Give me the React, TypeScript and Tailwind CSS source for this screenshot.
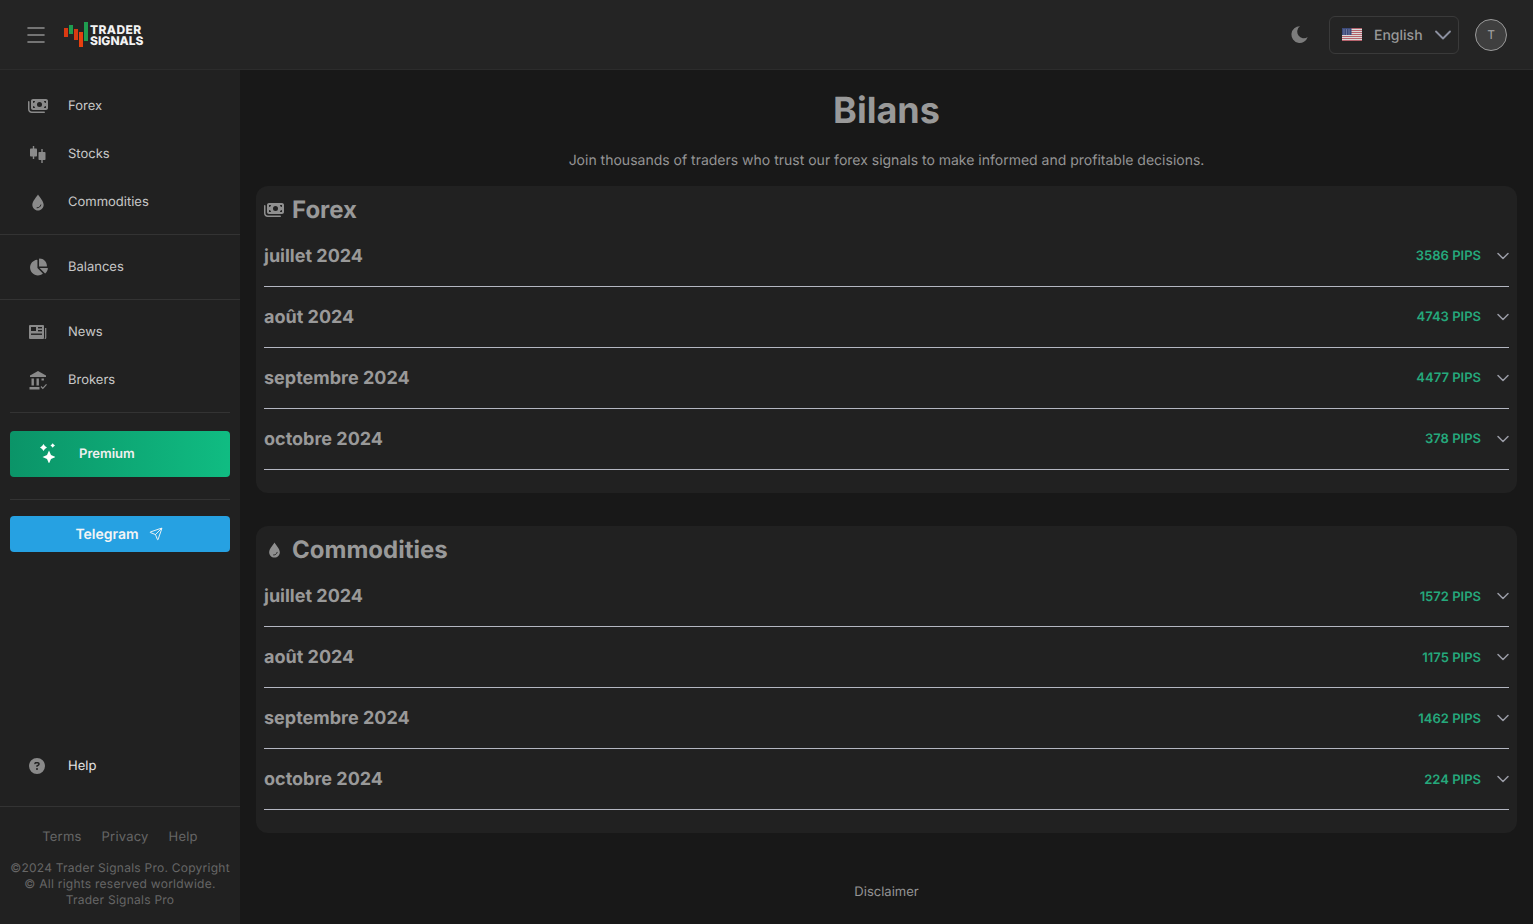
import React from "react";
import { ChevronDown, Menu, Send } from "lucide-react";
import { FaMoneyBills, FaChartPie, FaCircleQuestion } from "react-icons/fa6";

const StocksIcon = ({ className }: { className?: string }) => (
  <svg viewBox="0 0 16 17" className={className} fill="currentColor">
    <rect x="2.8" y="0" width="1.4" height="13" />
    <rect x="0" y="2.5" width="7" height="8" rx="0.8" />
    <rect x="11.3" y="3" width="1.4" height="14" />
    <rect x="8.5" y="6" width="7" height="8" rx="0.8" />
  </svg>
);

const DropIcon = ({ className }: { className?: string }) => (
  <svg viewBox="0 0 14 18" className={className} fill="currentColor">
    <path d="M7 0.5C5.6 3 1 7.6 1 11.4 1 14.8 3.7 17.5 7 17.5s6-2.7 6-6.1C13 7.6 8.4 3 7 0.5z" />
    <path d="M6 14.6c2 0 3.5-1 4-3" fill="none" stroke="#212121" strokeWidth="1" strokeLinecap="round" />
  </svg>
);

const NewsIcon = ({ className }: { className?: string }) => (
  <svg viewBox="0 0 18 14" className={className}>
    <rect x="0" y="0" width="15" height="14" rx="1" fill="currentColor" />
    <rect x="2" y="2" width="5" height="4" fill="#212121" />
    <rect x="9" y="2" width="4" height="1.4" fill="#212121" />
    <rect x="9" y="5" width="4" height="1.4" fill="#212121" />
    <rect x="2" y="8.5" width="11" height="1.4" fill="#212121" />
    <path d="M16.7 3v9.5q0 1-1 1" fill="none" stroke="currentColor" strokeWidth="1.2" />
  </svg>
);

const BankIcon = ({ className }: { className?: string }) => (
  <svg viewBox="0 0 18 19" className={className} fill="currentColor">
    <path d="M9 0 17 4.4V6H1V4.4z" />
    <rect x="2.5" y="7.5" width="2.4" height="7" />
    <rect x="7.5" y="7.5" width="2.4" height="7" />
    <rect x="12.5" y="7.5" width="2.4" height="2" />
    <rect x="0.5" y="16" width="10" height="2.5" />
    <path d="M12 15.5l1.8 1.8 3.7-4" fill="none" stroke="currentColor" strokeWidth="1.2" />
  </svg>
);

const MoonIcon = ({ className }: { className?: string }) => (
  <svg viewBox="0 0 18 17" className={className} fill="currentColor">
    <path d="M9 .3A8.3 8.3 0 1 0 16.7 11 6.5 6.5 0 0 1 9 .3z" />
  </svg>
);

const SparkIcon = ({ className }: { className?: string }) => (
  <svg viewBox="0 0 15 20" className={className} fill="currentColor">
    <path d="M9 7.5 11 12 15.5 14 11 16 9 20.5 7 16 2.5 14 7 12z" />
    <path d="M3.5 1 4.9 3.1 7 4.5 4.9 5.9 3.5 8 2.1 5.9 0 4.5 2.1 3.1z" />
    <path d="M12.7 0.2 13.7 1.5 15 2.5 13.7 3.5 12.7 4.8 11.7 3.5 10.4 2.5 11.7 1.5z" />
  </svg>
);

const Logo = () => (
  <div className="flex items-center gap-[2px]">
    <svg viewBox="0 0 24 25" className="h-[25px] w-[24px]">
      <rect x="0" y="6" width="4" height="9" fill="#d93a12" />
      <rect x="5" y="3" width="4" height="9" fill="#1f9d4f" />
      <rect x="10" y="7" width="4" height="11" fill="#d93a12" />
      <rect x="15" y="10" width="4" height="15" fill="#e8400f" />
      <rect x="20" y="0" width="4" height="19" fill="#1f9d4f" />
    </svg>
    <div className="flex flex-col text-[12px] leading-[11px] font-extrabold text-[#f2f2f2]">
      <div className="h-[11px] tracking-[0.4px]">TRADER</div>
      <div className="h-[11px]">SIGNALS</div>
    </div>
  </div>
);

const Flag = () => (
  <svg viewBox="0 0 20 13" className="h-[13px] w-[20px]">
    <rect width="20" height="13" fill="#d9d9d9" />
    {[0, 2, 4, 6, 8, 10, 12].map((y) => (
      <rect key={y} y={y} width="20" height="1" fill="#b5626c" />
    ))}
    <rect width="9.5" height="7" fill="#3c4a7a" />
    {[1.5, 4, 6.5].map((x) =>
      [1.5, 3.5, 5.5].map((y) => <rect key={`${x}-${y}`} x={x} y={y} width="1" height="1" fill="#9aa2c0" />)
    )}
  </svg>
);

const NavItem = ({ icon, label, bright }: { icon: React.ReactNode; label: string; bright?: boolean }) => (
  <div className={`flex h-12 items-center text-[13px] ${bright ? "text-[#e5e5e5]" : "text-[#c8c8c8]"}`}>
    <span className="flex w-[68px] justify-center pl-[18px] pr-[10px] text-[#8a8a8a]">{icon}</span>
    <span className="pt-[2px]">{label}</span>
  </div>
);

const MonthRow = ({ month, pips }: { month: string; pips: number }) => (
  <div className="flex h-[61px] items-center border-b border-[#b4b7c2]">
    <span className="flex-1 pt-[2px] text-lg font-bold text-[#999999]">{month}</span>
    <span className="pt-[2px] text-[13px] font-semibold text-[#25a97c]">{pips} PIPS</span>
    <ChevronDown className="-mr-1 ml-3 h-5 w-5 text-[#9a9ca6]" strokeWidth={1.8} />
  </div>
);

const Section = ({ icon, title, rows }: { icon: React.ReactNode; title: string; rows: [string, number][] }) => (
  <section className="rounded-xl bg-[#212121] px-2 pb-[23px]">
    <div className="flex h-[40px] items-center gap-2 pt-[7px] text-2xl font-bold text-[#999999]">
      <span className="flex w-5 justify-center text-[#8f8f8f]">{icon}</span>
      <span>{title}</span>
    </div>
    {rows.map(([month, pips]) => (
      <MonthRow key={month} month={month} pips={pips} />
    ))}
  </section>
);

export default function App() {
  return (
    <div className="flex h-[924px] flex-col overflow-hidden bg-[#181818] font-['Inter',sans-serif] [text-rendering:geometricPrecision]">
      {/* Top bar */}
      <header className="flex h-[70px] items-center border-b border-[#2c2c2c] bg-[#242424] pl-6 pr-[26px]">
        <Menu className="mr-4 h-6 w-6 text-[#8e8e8e]" strokeWidth={1.6} />
        <Logo />
        <div className="flex-1" />
        <MoonIcon className="mr-[20px] h-[17px] w-[18px] text-[#7c7c7c]" />
        <div className="mr-4 flex h-[38px] w-[130px] items-center rounded-md border border-[#3a3a3a] pl-3 pr-[1px] text-sm font-medium text-[#999999]">
          <Flag />
          <span className="ml-3 flex-1 pt-[2px]">English</span>
          <ChevronDown className="h-7 w-7 text-[#8c90a0]" strokeWidth={1.6} />
        </div>
        <div className="flex h-8 w-8 items-center justify-center rounded-full border border-[#9a9a9a] bg-[#3f3f3f] text-xs text-[#a8a8a8]">
          T
        </div>
      </header>

      <div className="flex min-h-0 flex-1">
        {/* Sidebar */}
        <aside className="flex w-[240px] shrink-0 flex-col bg-[#212121] pt-[12px]">
          <NavItem icon={<FaMoneyBills className="h-[16px] w-[20px]" />} label="Forex" />
          <NavItem icon={<StocksIcon className="h-[17px] w-[16px]" />} label="Stocks" />
          <NavItem icon={<DropIcon className="h-[17px] w-[14px]" />} label="Commodities" />
          <div className="my-2 border-t border-[#333333]" />
          <NavItem icon={<FaChartPie className="h-[18px] w-[19px]" />} label="Balances" />
          <div className="my-2 border-t border-[#333333]" />
          <NavItem icon={<NewsIcon className="h-[14px] w-[18px]" />} label="News" />
          <NavItem icon={<BankIcon className="h-[19px] w-[18px]" />} label="Brokers" />

          <div className="mx-[10px] mt-2 border-t border-[#333333]" />
          <div className="mx-[10px] mt-[18px] flex h-[46px] items-center rounded bg-gradient-to-r from-[#0b9468] to-[#10bc82] text-[13px] font-semibold text-[#f0f0f0]">
            <SparkIcon className="mb-[2px] ml-[30px] mr-[24px] h-5 w-[15px] text-white" />
            <span className="pt-[2px]">Premium</span>
          </div>
          <div className="mx-[10px] mt-[22px] border-t border-[#333333]" />
          <div className="mx-[10px] mt-4 flex h-9 items-center justify-center gap-[10px] rounded bg-[#26a1e2] pr-[2px] text-sm font-semibold text-[#f5f5f5]">
            <span className="pt-[2px]">Telegram</span>
            <Send className="h-[14px] w-[14px]" strokeWidth={1.6} />
          </div>

          <div className="mt-auto">
            <NavItem icon={<FaCircleQuestion className="h-4 w-4 -translate-x-[1px]" />} label="Help" bright />
            <div className="mt-4 border-t border-[#333333]" />
            <div className="flex justify-center gap-5 pt-[20px] text-[13px] tracking-[0.2px] leading-5 text-[#666666]">
              <span>Terms</span>
              <span>Privacy</span>
              <span>Help</span>
            </div>
            <p className="mt-[13px] mb-4 text-center text-xs leading-4 tracking-[0.25px] text-[#666666]">
              ©2024 Trader Signals Pro. Copyright
              <br />© All rights reserved worldwide.
              <br />
              Trader Signals Pro
            </p>
          </div>
        </aside>

        {/* Main */}
        <main className="flex min-w-0 flex-1 flex-col px-4">
          <h1 className="pt-[15px] text-center text-4xl leading-[50px] font-bold text-[#999999]">Bilans</h1>
          <p className="mt-4 mb-[15px] text-center text-sm leading-5 text-[#949494]">
            Join thousands of traders who trust our forex signals to make informed and profitable decisions.
          </p>
          <div className="flex flex-col gap-[33.4px]">
            <Section
              icon={<FaMoneyBills className="h-[16px] w-[20px]" />}
              title="Forex"
              rows={[
                ["juillet 2024", 3586],
                ["août 2024", 4743],
                ["septembre 2024", 4477],
                ["octobre 2024", 378],
              ]}
            />
            <Section
              icon={<DropIcon className="h-[16px] w-[13px]" />}
              title="Commodities"
              rows={[
                ["juillet 2024", 1572],
                ["août 2024", 1175],
                ["septembre 2024", 1462],
                ["octobre 2024", 224],
              ]}
            />
          </div>
          <div className="mt-[48.6px] text-center text-[13px] leading-5 text-[#949494]">Disclaimer</div>
        </main>
      </div>
    </div>
  );
}
